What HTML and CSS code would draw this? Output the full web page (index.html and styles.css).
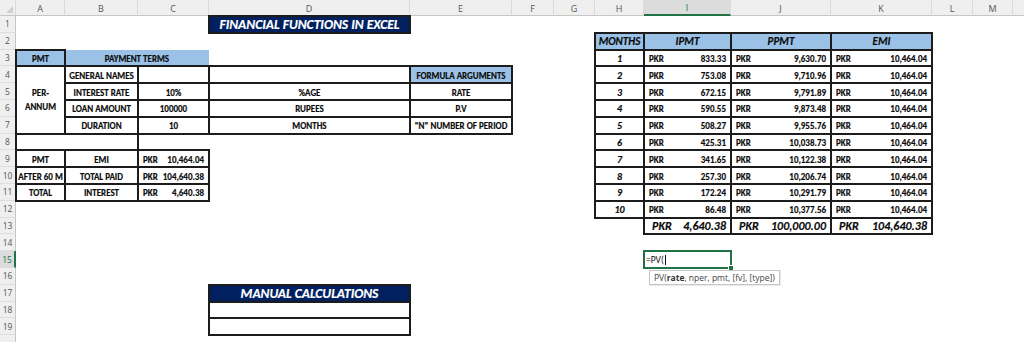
FILE: index.html
```html
<!DOCTYPE html>
<html>
<head>
<meta charset="utf-8">
<link rel="stylesheet" href="styles.css">
</head>
<body>
<div class="sheet">
  <!-- column headers -->
  <div class="ch corner"><span class="tri"></span></div>
  <div class="ch">A</div><div class="ch">B</div><div class="ch">C</div><div class="ch">D</div>
  <div class="ch">E</div><div class="ch">F</div><div class="ch">G</div><div class="ch">H</div>
  <div class="ch on">I</div><div class="ch">J</div><div class="ch">K</div><div class="ch">L</div>
  <div class="ch">M</div><div class="ch last"></div>

  <!-- row 1 -->
  <div class="rh">1</div><div class="s3"></div>
  <div class="c b title">FINANCIAL FUNCTIONS IN EXCEL</div><div class="s10"></div>

  <!-- row 2 -->
  <div class="rh">2</div><div class="s7"></div>
  <div class="c b blue hd">MONTHS</div><div class="c b blue hd">IPMT</div>
  <div class="c b blue hd">PPMT</div><div class="c b blue hd">EMI</div><div class="s3"></div>

  <!-- row 3 -->
  <div class="rh">3</div>
  <div class="c b blue">PMT</div><div class="c blue s2 flat">PAYMENT TERMS</div><div class="s4"></div>
  <div class="c b bi">1</div>
  <div class="c b v"><span>PKR</span><span>833.33</span></div>
  <div class="c b v"><span>PKR</span><span>9,630.70</span></div>
  <div class="c b v"><span>PKR</span><span>10,464.04</span></div><div class="s3"></div>

  <!-- row 4 -->
  <div class="rh">4</div>
  <div class="c b r4 pa">PER-<br>ANNUM</div>
  <div class="c b">GENERAL NAMES</div><div class="c b"></div><div class="c b"></div>
  <div class="c b blue">FORMULA ARGUMENTS</div><div class="s2"></div>
  <div class="c b bi">2</div>
  <div class="c b v"><span>PKR</span><span>753.08</span></div>
  <div class="c b v"><span>PKR</span><span>9,710.96</span></div>
  <div class="c b v"><span>PKR</span><span>10,464.04</span></div><div class="s3"></div>

  <!-- row 5 -->
  <div class="rh">5</div>
  <div class="c b">INTEREST RATE</div><div class="c b">10%</div><div class="c b">%AGE</div>
  <div class="c b">RATE</div><div class="s2"></div>
  <div class="c b bi">3</div>
  <div class="c b v"><span>PKR</span><span>672.15</span></div>
  <div class="c b v"><span>PKR</span><span>9,791.89</span></div>
  <div class="c b v"><span>PKR</span><span>10,464.04</span></div><div class="s3"></div>

  <!-- row 6 -->
  <div class="rh">6</div>
  <div class="c b">LOAN AMOUNT</div><div class="c b">100000</div><div class="c b">RUPEES</div>
  <div class="c b">P.V</div><div class="s2"></div>
  <div class="c b bi">4</div>
  <div class="c b v"><span>PKR</span><span>590.55</span></div>
  <div class="c b v"><span>PKR</span><span>9,873.48</span></div>
  <div class="c b v"><span>PKR</span><span>10,464.04</span></div><div class="s3"></div>

  <!-- row 7 -->
  <div class="rh">7</div>
  <div class="c b">DURATION</div><div class="c b">10</div><div class="c b">MONTHS</div>
  <div class="c b">"N" NUMBER OF PERIOD</div><div class="s2"></div>
  <div class="c b bi">5</div>
  <div class="c b v"><span>PKR</span><span>508.27</span></div>
  <div class="c b v"><span>PKR</span><span>9,955.76</span></div>
  <div class="c b v"><span>PKR</span><span>10,464.04</span></div><div class="s3"></div>

  <!-- row 8 -->
  <div class="rh">8</div>
  <div class="c b s2"></div><div class="s5"></div>
  <div class="c b bi">6</div>
  <div class="c b v"><span>PKR</span><span>425.31</span></div>
  <div class="c b v"><span>PKR</span><span>10,038.73</span></div>
  <div class="c b v"><span>PKR</span><span>10,464.04</span></div><div class="s3"></div>

  <!-- row 9 -->
  <div class="rh">9</div>
  <div class="c b">PMT</div><div class="c b">EMI</div>
  <div class="c b v"><span>PKR</span><span>10,464.04</span></div><div class="s4"></div>
  <div class="c b bi">7</div>
  <div class="c b v"><span>PKR</span><span>341.65</span></div>
  <div class="c b v"><span>PKR</span><span>10,122.38</span></div>
  <div class="c b v"><span>PKR</span><span>10,464.04</span></div><div class="s3"></div>

  <!-- row 10 -->
  <div class="rh">10</div>
  <div class="c b">AFTER 60 M</div><div class="c b">TOTAL PAID</div>
  <div class="c b v"><span>PKR</span><span>104,640.38</span></div><div class="s4"></div>
  <div class="c b bi">8</div>
  <div class="c b v"><span>PKR</span><span>257.30</span></div>
  <div class="c b v"><span>PKR</span><span>10,206.74</span></div>
  <div class="c b v"><span>PKR</span><span>10,464.04</span></div><div class="s3"></div>

  <!-- row 11 -->
  <div class="rh">11</div>
  <div class="c b">TOTAL</div><div class="c b">INTEREST</div>
  <div class="c b v"><span>PKR</span><span>4,640.38</span></div><div class="s4"></div>
  <div class="c b bi">9</div>
  <div class="c b v"><span>PKR</span><span>172.24</span></div>
  <div class="c b v"><span>PKR</span><span>10,291.79</span></div>
  <div class="c b v"><span>PKR</span><span>10,464.04</span></div><div class="s3"></div>

  <!-- row 12 -->
  <div class="rh">12</div><div class="s7"></div>
  <div class="c b bi">10</div>
  <div class="c b v"><span>PKR</span><span>86.48</span></div>
  <div class="c b v"><span>PKR</span><span>10,377.56</span></div>
  <div class="c b v"><span>PKR</span><span>10,464.04</span></div><div class="s3"></div>

  <!-- row 13 -->
  <div class="rh">13</div><div class="s8"></div>
  <div class="c b v tot"><span>PKR</span><span>4,640.38</span></div>
  <div class="c b v tot"><span>PKR</span><span>100,000.00</span></div>
  <div class="c b v tot"><span>PKR</span><span>104,640.38</span></div><div class="s3"></div>

  <!-- row 14 -->
  <div class="rh">14</div><div class="s14"></div>

  <!-- row 15 -->
  <div class="rh on">15</div><div class="s8"></div>
  <div class="sel">=PV(<span class="caret"></span><span class="handle"></span>
    <div class="tip">PV(<b>rate</b>, nper, pmt, [fv], [type])</div>
  </div><div class="s5"></div>

  <!-- row 16 -->
  <div class="rh">16</div><div class="s14"></div>

  <!-- row 17 -->
  <div class="rh">17</div><div class="s3"></div>
  <div class="c b title">MANUAL CALCULATIONS</div><div class="s10"></div>

  <!-- row 18 -->
  <div class="rh">18</div><div class="s3"></div><div class="c b"></div><div class="s10"></div>

  <!-- row 19 -->
  <div class="rh">19</div><div class="s3"></div><div class="c b"></div><div class="s10"></div>

  <!-- row 20 (cut off by the window) -->
  <div class="rh"></div><div class="s14"></div>
</div>
</body>
</html>
```

FILE: styles.css
```css
html, body {
  margin: 0;
  padding: 0;
  background: #ffffff;
  overflow: hidden;
}

body {
  font-family: Carlito, Lato, "Liberation Sans", sans-serif;
}

.sheet {
  display: grid;
  grid-template-columns: 16px 49px 73px 71px 201px 102px 42px 41px 49px 87px 100px 101px 41px 40px 1fr;
  grid-template-rows: 16px repeat(20, 16.8px);
  width: 1024px;
  height: 342px;
  overflow: hidden;
}

/* headers */
.ch {
  background: #efefef;
  border-bottom: 1px solid #c6c6c6;
  border-right: 1px solid #dadada;
  box-sizing: border-box;
  font-family: "Open Sans", "Noto Sans", sans-serif;
  font-size: 9px;
  color: #555555;
  display: flex;
  align-items: center;
  justify-content: center;
  padding-top: 1px;
}
.ch.on {
  background: #dcdcdc;
  border-bottom: 2px solid #217346;
  color: #217346;
}
.ch.last { border-right: none; }
.corner { position: relative; }
.tri {
  position: absolute;
  right: 2px;
  bottom: 2px;
  width: 0;
  height: 0;
  border-left: 7px solid transparent;
  border-bottom: 7px solid #d0d0d0;
}

.rh {
  grid-column: 1;
  background: #efefef;
  border-right: 1px solid #c6c6c6;
  border-bottom: 1px solid #dedede;
  box-sizing: border-box;
  font-family: "Open Sans", "Noto Sans", sans-serif;
  font-size: 8.5px;
  color: #555555;
  display: flex;
  align-items: center;
  justify-content: center;
}
.rh.on {
  background: #dcdcdc;
  border-right: 2px solid #217346;
  color: #217346;
}

/* spans */
.s2 { grid-column: span 2; }
.s3 { grid-column: span 3; }
.s4 { grid-column: span 4; }
.s5 { grid-column: span 5; }
.s7 { grid-column: span 7; }
.s8 { grid-column: span 8; }
.s10 { grid-column: span 10; }
.s14 { grid-column: span 14; }
.r4 { grid-row: span 4; }

/* cells */
.c {
  display: flex;
  align-items: center;
  justify-content: center;
  font-size: 9px;
  font-weight: 700;
  color: #0a0a0a;
  white-space: nowrap;
  min-width: 0;
  padding-top: 1px;
  box-sizing: border-box;
  -webkit-text-stroke: 0.15px #0a0a0a;
}
.b {
  outline: 2px solid #1c1c1c;
  outline-offset: -1px;
  z-index: 1;
}
.blue { background: #9bc2e6; }
.flat { z-index: 0; }
.bi { font-style: italic; font-size: 10px; }
.hd { font-style: italic; font-size: 11px; }
.title {
  background: #002060;
  color: #ffffff;
  font-style: italic;
  font-size: 13.5px;
  -webkit-text-stroke: 0.15px #ffffff;
}
.pa {
  flex-direction: column;
  line-height: 14px;
  text-align: center;
}
.v {
  justify-content: space-between;
  padding: 1px 5px 0 5px;
}
.tot {
  font-style: italic;
  font-size: 12px;
  padding: 1px 5px 0 8px;
}

/* selected cell */
.sel {
  position: relative;
  z-index: 2;
  outline: 2px solid #217346;
  outline-offset: -1px;
  display: flex;
  align-items: center;
  padding: 1px 0 0 2px;
  font-size: 9.5px;
  color: #111111;
}
.caret {
  display: inline-block;
  width: 1px;
  height: 10px;
  background: #111111;
  margin-left: 1px;
}
.handle {
  position: absolute;
  right: -3px;
  bottom: -3px;
  width: 4px;
  height: 4px;
  background: #217346;
  border: 1px solid #ffffff;
}
.tip {
  position: absolute;
  left: 5px;
  top: 19px;
  background: #ffffff;
  border: 1px solid #c6c6c6;
  box-shadow: 1px 1px 1px rgba(0,0,0,0.08);
  padding: 0 4px;
  height: 13px;
  line-height: 13px;
  font-family: "Open Sans", "Noto Sans", sans-serif;
  font-size: 8.5px;
  color: #444444;
  white-space: nowrap;
}
.tip b { font-weight: 700; color: #333333; }
```
